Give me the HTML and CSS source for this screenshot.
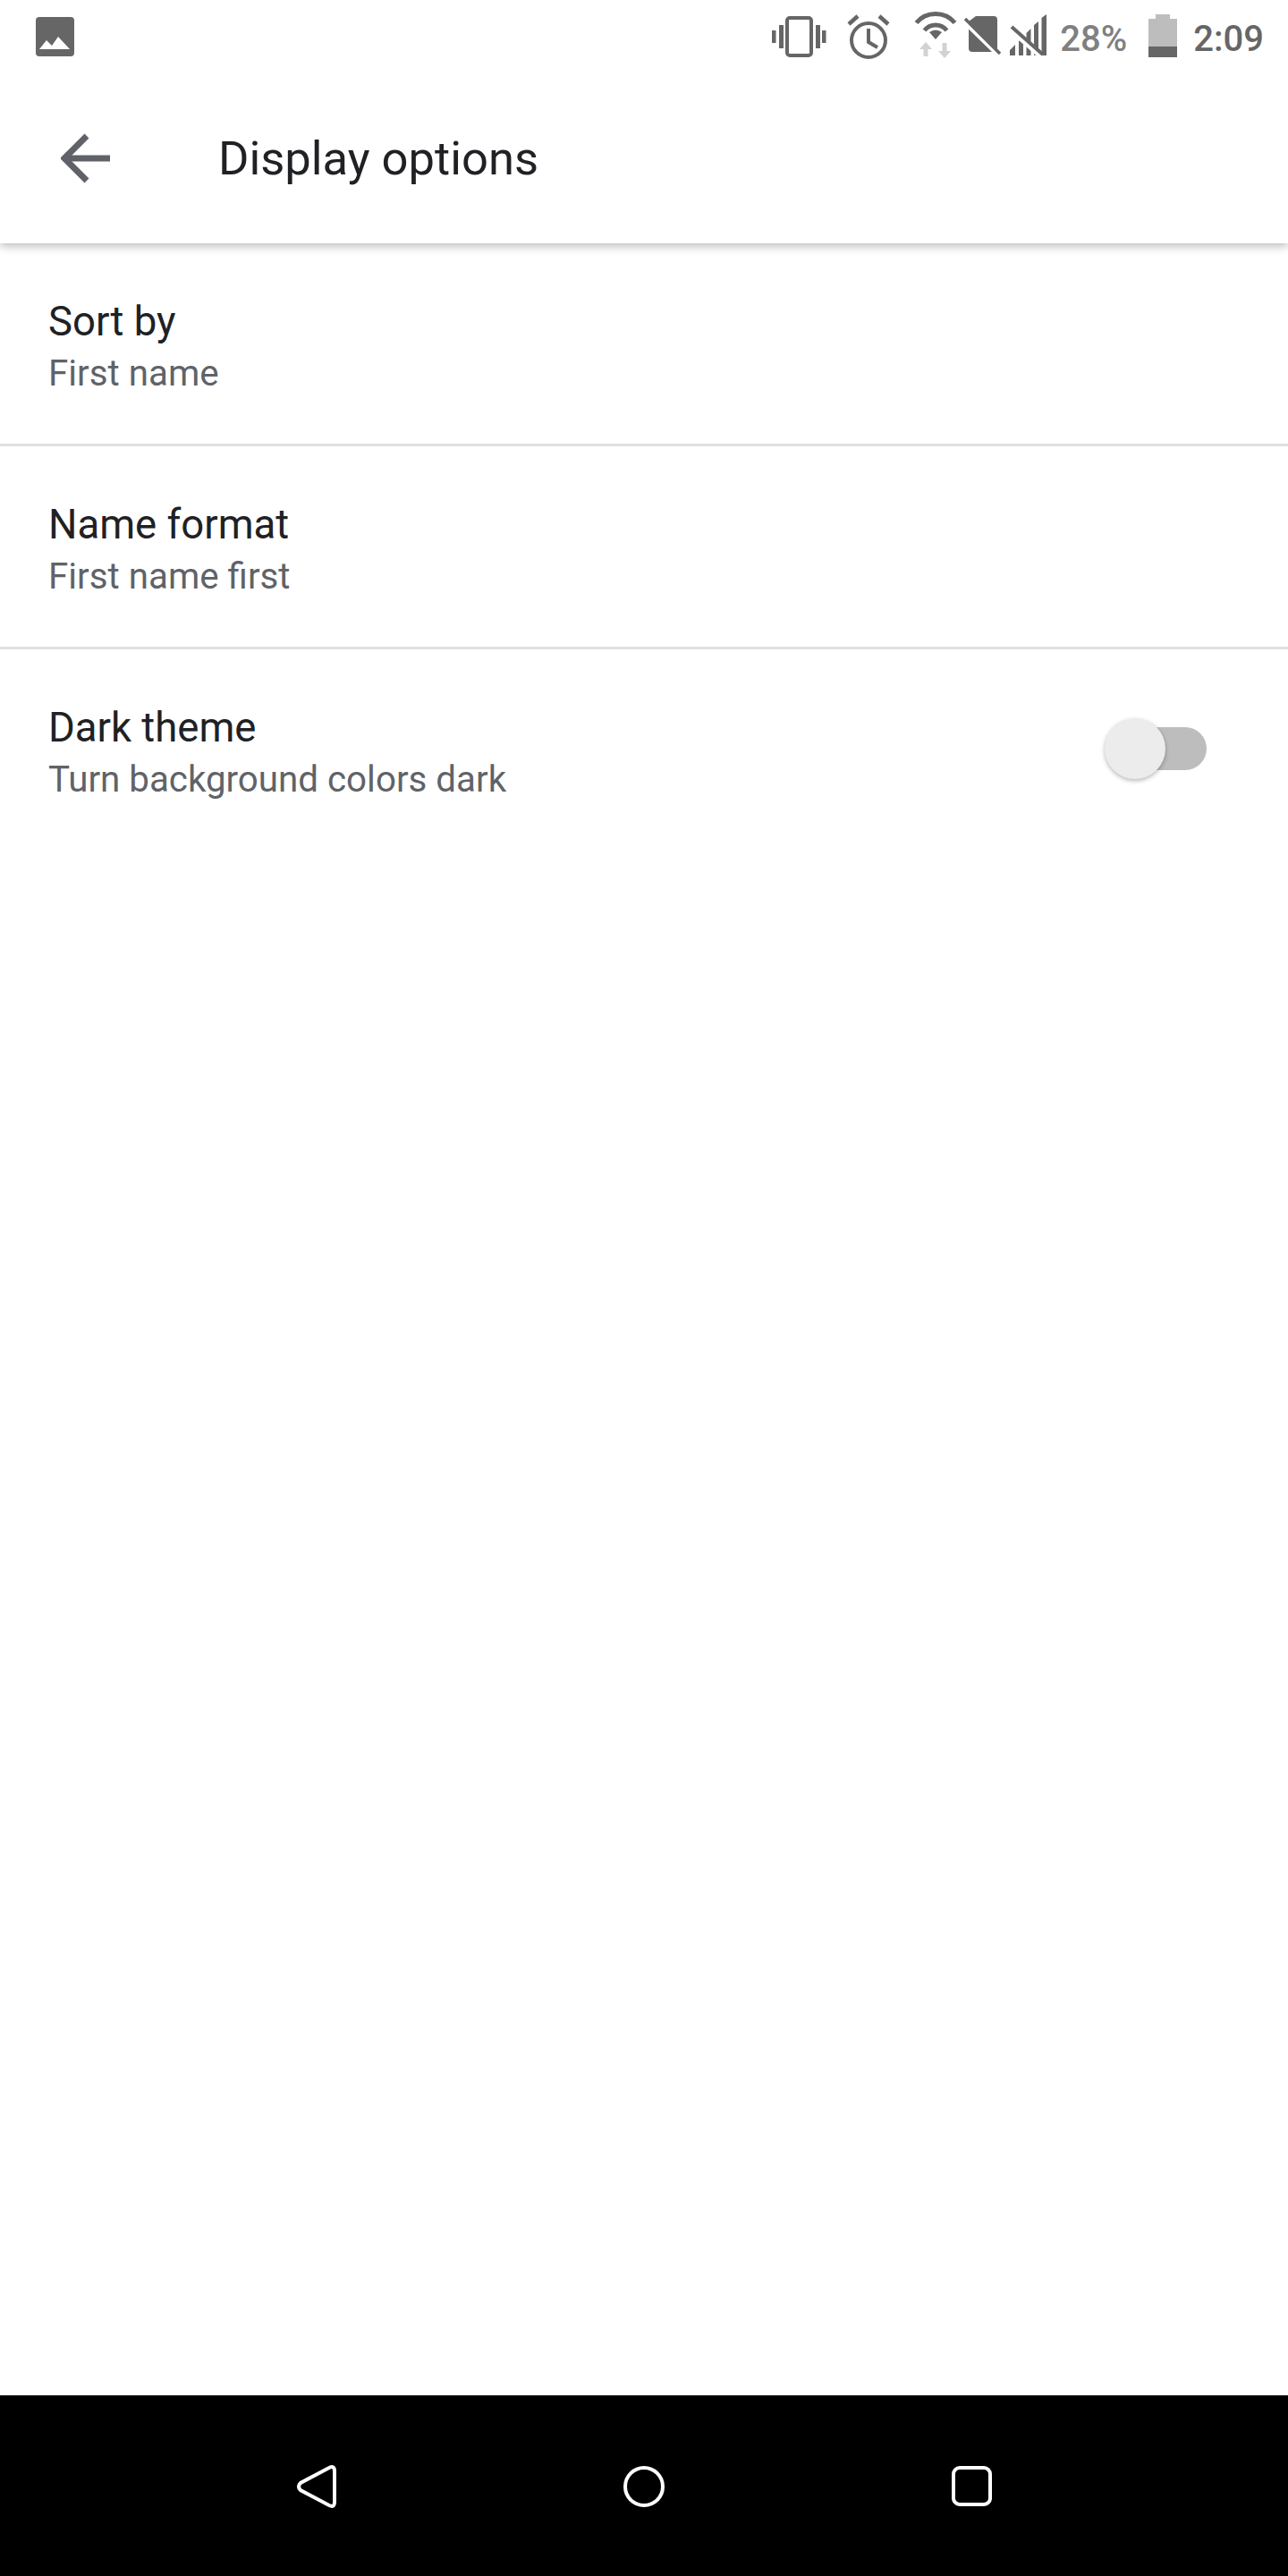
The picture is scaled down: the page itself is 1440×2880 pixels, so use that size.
FILE: index.html
```html
<!DOCTYPE html>
<html lang="en">
<head>
<meta charset="utf-8">
<title>Display options</title>
<link rel="stylesheet" href="styles.css">
</head>
<body>
<div class="page">
  <header class="top">
    <div class="status">
      <svg class="ic-image" width="43" height="80" viewBox="0 0 43 80"><rect x="0" y="19" width="43" height="44" rx="4" fill="#666"/><path d="M4 55L12 45L18 51L25 41L38 55Z" fill="#fff"/></svg>
      <div class="status-right">
        <svg width="63" height="80" viewBox="0 0 63 80" fill="#666"><rect x="18" y="20" width="27" height="42" rx="3" fill="none" stroke="#666" stroke-width="4"/><rect x="9" y="28" width="5" height="26"/><rect x="1" y="34" width="4.500" height="14"/><rect x="50" y="28" width="5" height="26"/><rect x="57" y="34" width="4.500" height="14"/></svg>
        <svg class="ic-alarm" width="50" height="80" viewBox="0 0 50 80" fill="none" stroke="#666" stroke-width="4"><circle cx="25" cy="45" r="19"/><path d="M25 32V47L35 53"/><path d="M3 27L13 18M37 18L47 27" stroke-width="4.500"/></svg>
        <svg class="ic-wifi" width="49" height="80" viewBox="0 0 49 80" fill="none" stroke="#666" stroke-width="5"><path d="M3.500 25.500A28 28 0 0 1 46.500 25.500"/><path d="M12.500 34A16 16 0 0 1 37.500 34"/><path d="M25 44L18 36Q25 31 32 36Z" fill="#666" stroke="none"/><path d="M14 47L7 55H11.500V63H16.500V55H21Z M32.500 48V57H28L35 65L42 57H37.500V48Z" fill="#d2d2d2" stroke="none"/></svg>
        <svg class="ic-sim" width="43" height="80" viewBox="0 0 43 80"><path d="M14 18H34Q38 18 38 22V54Q38 58 34 58H10Q6 58 6 54V24Z" fill="#666"/><path d="M0 24L37 60" stroke="#fff" stroke-width="4" fill="none"/><path d="M2 21L41 60" stroke="#666" stroke-width="3.500" fill="none"/></svg>
        <svg class="ic-signal" width="43" height="80" viewBox="0 0 43 80"><path d="M1 62V56L7 50V62ZM11 62V46L16 41V62ZM19.500 62V37L24.500 32V62ZM28 62V28L33 24V62ZM36.500 62V20L42 16V62Z" fill="#666"/><path d="M1 31.500L36 62.500" stroke="#fff" stroke-width="7" fill="none"/><path d="M3 30L38 61" stroke="#666" stroke-width="4" fill="none"/></svg>
        <span class="pct">28%</span>
        <svg class="ic-batt" width="32" height="80" viewBox="0 0 32 80"><path d="M8 16H24V21H32V52H0V21H8Z" fill="#bdbdbd"/><rect x="0" y="52" width="32" height="12" fill="#666"/></svg>
        <span class="time">2:09</span>
      </div>
    </div>
    <div class="bar">
      <svg class="ic-back" width="56" height="64" viewBox="0 0 56 64" fill="none" stroke="#5f6368" stroke-width="7"><path d="M55 32H5"/><path d="M29 7L4 32L29 57"/></svg>
      <h1 class="title">Display options</h1>
    </div>
  </header>
  <main class="list">
    <div class="row">
      <div class="row-text"><div class="row-title">Sort by</div><div class="row-sub">First name</div></div>
    </div>
    <div class="row">
      <div class="row-text"><div class="row-title">Name format</div><div class="row-sub">First name first</div></div>
    </div>
    <div class="row row-last">
      <div class="row-text"><div class="row-title">Dark theme</div><div class="row-sub">Turn background colors dark</div></div>
      <div class="switch"><span class="track"></span><span class="knob"></span></div>
    </div>
  </main>
  <nav class="nav">
    <svg width="48" height="48" viewBox="0 0 48 48" fill="none" stroke="#fff" stroke-width="4"><path d="M38 3Q44 0 44 7V41Q44 48 38 45L6 28Q2 24 6 20Z"/></svg>
    <svg width="48" height="48" viewBox="0 0 48 48" fill="none" stroke="#fff" stroke-width="4"><circle cx="24" cy="24" r="21"/></svg>
    <svg width="48" height="48" viewBox="0 0 48 48" fill="none" stroke="#fff" stroke-width="4"><rect x="4" y="3" width="41" height="41" rx="7"/></svg>
  </nav>
</div>
</body>
</html>
```

FILE: styles.css
```css
* { box-sizing: border-box; }
html, body { margin: 0; padding: 0; background: #fff; }
body { font-family: Roboto, "Liberation Sans", sans-serif; }
.page { width: 1440px; height: 2880px; display: flex; flex-direction: column; }

.top { position: relative; z-index: 1; height: 272px; background: #fff; box-shadow: 0 3px 10px rgba(0, 0, 0, 0.28); }
.status { height: 80px; display: flex; justify-content: space-between; padding: 0 27px 0 40px; }
.status svg { display: block; }
.status-right { display: flex; align-items: flex-start; }
.ic-alarm { margin-left: 21px; }
.ic-wifi { margin-left: 25px; }
.ic-sim { margin-left: 7px; }
.ic-signal { margin-left: 8px; }
.pct, .time { font-size: 40px; line-height: 72px; padding-top: 8px; font-weight: 500; }
.pct { margin-left: 14px; color: #808080; }
.ic-batt { margin-left: 24px; }
.time { margin-left: 18px; color: #666; }

.bar { height: 192px; display: flex; align-items: flex-start; padding-left: 68px; }
.ic-back { margin-top: 65px; }
.title { margin: 58px 0 0 120px; font-size: 52.500px; line-height: 78px; font-weight: 400; color: #202124; }

.list { flex: 1; }
.row { height: 227px; border-bottom: 3px solid #e0e0e0; display: flex; justify-content: space-between; align-items: flex-start; padding-left: 54px; }
.row-last { border-bottom: 0; }
.row-text { padding-top: 57px; }
.row-title { font-size: 45.500px; line-height: 62px; color: #202124; }
.row-sub { font-size: 40.300px; line-height: 54px; color: #5f6368; }

.switch { position: relative; width: 114px; height: 69px; margin: 77px 91px 0 0; }
.track { position: absolute; right: 0; top: 10px; width: 90px; height: 48px; border-radius: 24px; background: #bdbdbd; }
.knob { position: absolute; left: 0; top: 0; width: 68px; height: 68px; border-radius: 50%; background: #ececec; box-shadow: 0 2px 5px rgba(0, 0, 0, 0.28); }

.nav { height: 202px; background: #000; display: flex; justify-content: center; align-items: center; gap: 318px; padding-top: 2px; }
```
